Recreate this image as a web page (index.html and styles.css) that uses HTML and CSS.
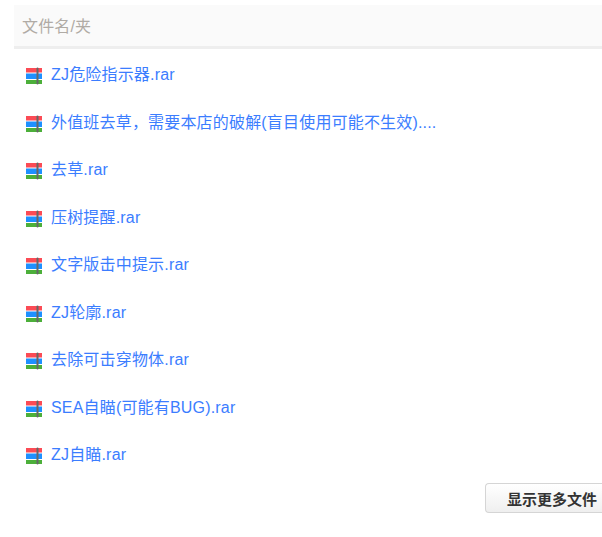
FILE: index.html
```html
<!DOCTYPE html>
<html lang="zh-CN">
<head>
<meta charset="utf-8">
<title>文件</title>
<link rel="stylesheet" href="styles.css">
</head>
<body>
<div class="panel">
  <div class="head">文件名/夹</div>
  <ul class="files">
    <li class="file"><svg class="ico" viewBox="0 0 18 18"><use href="#rar"/></svg><a>ZJ危险指示器.rar</a></li>
    <li class="file"><svg class="ico" viewBox="0 0 18 18"><use href="#rar"/></svg><a>外值班去草，需要本店的破解(盲目使用可能不生效)....</a></li>
    <li class="file"><svg class="ico" viewBox="0 0 18 18"><use href="#rar"/></svg><a>去草.rar</a></li>
    <li class="file"><svg class="ico" viewBox="0 0 18 18"><use href="#rar"/></svg><a>压树提醒.rar</a></li>
    <li class="file"><svg class="ico" viewBox="0 0 18 18"><use href="#rar"/></svg><a>文字版击中提示.rar</a></li>
    <li class="file"><svg class="ico" viewBox="0 0 18 18"><use href="#rar"/></svg><a>ZJ轮廓.rar</a></li>
    <li class="file"><svg class="ico" viewBox="0 0 18 18"><use href="#rar"/></svg><a>去除可击穿物体.rar</a></li>
    <li class="file"><svg class="ico" viewBox="0 0 18 18"><use href="#rar"/></svg><a>SEA自瞄(可能有BUG).rar</a></li>
    <li class="file"><svg class="ico" viewBox="0 0 18 18"><use href="#rar"/></svg><a>ZJ自瞄.rar</a></li>
  </ul>
  <div class="more"><button class="btn">显示更多文件</button></div>
</div>
<svg class="defs" width="0" height="0">
  <symbol id="rar" viewBox="0 0 18 18">
    <rect x="1" y="1" width="16" height="4.5" fill="#fb4b55"/>
    <rect x="1" y="6.5" width="16" height="5.5" fill="#1e90ff"/>
    <rect x="1" y="13" width="16" height="4" fill="#4caf3a"/>
    <rect x="11.5" y="0.5" width="2" height="17" rx="1" fill="#666"/>
  </symbol>
</svg>
</body>
</html>
```
FILE: styles.css
```css
html, body { margin: 0; padding: 0; background: #fff; }
body { width: 602px; height: 537px; overflow: hidden; font-family: "Liberation Sans", "Noto Sans CJK SC", sans-serif; font-size: 16px; }
.panel { padding: 5px 0 0 14px; }
.head { height: 41px; line-height: 43px; padding-left: 8px; background: #fafafa; border-bottom: 3px solid #eee; color: #b0aba5; letter-spacing: 0.15px; }
.files { list-style: none; margin: 0; padding: 0.5px 0 0; }
.file { display: flex; align-items: center; height: 47.5px; padding-left: 11px; }
.ico { width: 18px; height: 18px; margin: 6px 8px 0 0; flex: none; }
.file a { color: #3b7dff; letter-spacing: 0.18px; }
.more { display: flex; justify-content: flex-end; margin-top: 6px; }
.btn { width: 117px; height: 30px; padding: 0 0 0 16px; border: 1px solid #d5d5d5; border-right: 0; border-radius: 4px 0 0 4px; background: linear-gradient(#fff, #efefef); color: #333; font: bold 15px "Liberation Sans", "Noto Sans CJK SC", sans-serif; white-space: nowrap; }
.defs { position: absolute; }
```
